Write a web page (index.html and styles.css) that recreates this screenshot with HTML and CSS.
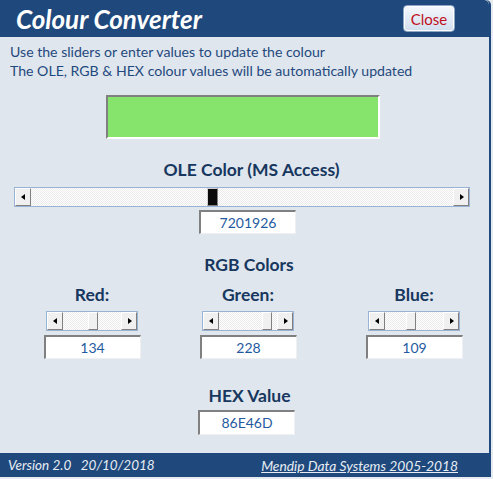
FILE: index.html
```html
<!DOCTYPE html>
<html>
<head>
<meta charset="utf-8">
<title>Colour Converter</title>
<link rel="stylesheet" href="styles.css">
</head>
<body>
<div class="window">
  <header class="titlebar">
    <h1 class="title">Colour Converter</h1>
    <button class="close">Close</button>
  </header>
  <main class="content">
    <p class="intro">Use the sliders or enter values to update the colour<br>The OLE, RGB &amp; HEX colour values will be automatically updated</p>
    <div class="swatch"></div>
    <h2 class="heading h-ole">OLE Color (MS Access)</h2>
    <div class="scrollbar wide">
      <span class="arrow left"></span>
      <span class="track"><span class="thumb dark" style="left:calc((100% - 11px) * 0.4293)"></span></span>
      <span class="arrow right"></span>
    </div>
    <div class="field f-ole">7201926</div>
    <h2 class="heading h-rgb">RGB Colors</h2>
    <div class="channels">
      <div class="channel">
        <h3 class="label">Red:</h3>
        <div class="scrollbar small">
          <span class="arrow left"></span>
          <span class="track"><span class="thumb" style="left:calc((100% - 10px) * 0.5255)"></span></span>
          <span class="arrow right"></span>
        </div>
        <div class="field">134</div>
      </div>
      <div class="channel">
        <h3 class="label">Green:</h3>
        <div class="scrollbar small">
          <span class="arrow left"></span>
          <span class="track"><span class="thumb" style="left:calc((100% - 10px) * 0.8941)"></span></span>
          <span class="arrow right"></span>
        </div>
        <div class="field">228</div>
      </div>
      <div class="channel blue">
        <h3 class="label">Blue:</h3>
        <div class="scrollbar small">
          <span class="arrow left"></span>
          <span class="track"><span class="thumb" style="left:calc((100% - 10px) * 0.4275)"></span></span>
          <span class="arrow right"></span>
        </div>
        <div class="field">109</div>
      </div>
    </div>
    <h2 class="heading h-hex">HEX Value</h2>
    <div class="field f-hex">86E46D</div>
  </main>
  <footer class="footer">
    <span class="version">Version 2.0&nbsp;&nbsp;&nbsp;20/10/2018</span>
    <a class="company" href="#">Mendip Data Systems 2005-2018</a>
  </footer>
</div>
</body>
</html>
```

FILE: styles.css
```css
* { box-sizing: border-box; }
html, body { margin: 0; padding: 0; }
body {
  background: #e6ebf2;
  font-family: Lato, "Open Sans", sans-serif;
  width: 493px;
  height: 479px;
  overflow: hidden;
}
.window {
  width: 491px;
  height: 477px;
  background: #dfe6ee;
  border-right: 2px solid #1f497d;
  border-top-right-radius: 5px;
  display: flex;
  flex-direction: column;
}
.titlebar {
  height: 37px;
  background: #1f497d;
  border-top-right-radius: 5px;
  display: flex;
  align-items: center;
  justify-content: space-between;
  padding: 0 34px 0 16px;
  flex: none;
}
.title {
  margin: 0;
  color: #ffffff;
  font-size: 26px;
  font-weight: 700;
  font-style: italic;
  line-height: 30px;
}
.close {
  width: 52px;
  height: 27px;
  border: 1px solid #8ea6c6;
  border-radius: 4px;
  background: linear-gradient(#f5f8fc, #d2deee);
  color: #c0101c;
  font-family: Lato, "Open Sans", sans-serif;
  font-size: 15px;
  padding: 0;
  box-shadow: inset 0 0 0 1px #ffffff;
}
.content {
  flex: 1;
  display: flex;
  flex-direction: column;
  align-items: center;
}
.intro {
  align-self: stretch;
  margin: 5px 0 0 10px;
  color: #1f497d;
  font-size: 14.1px;
  line-height: 19px;
}
.swatch {
  width: 274px;
  height: 44px;
  margin: 15px 0 0 -4px;
  background: #86e46d;
  border-top: 2px solid #808080;
  border-left: 2px solid #808080;
  border-bottom: 2px solid #ffffff;
  border-right: 2px solid #ffffff;
}
.heading {
  margin: 0;
  color: #17375e;
  font-size: 17.5px;
  font-weight: 700;
  line-height: 20px;
}
.h-ole { margin: 21px 0 0 14px; }
.h-rgb { margin: 21px 0 0 9px; }
.h-hex { margin: 27px 0 0 10px; }
.scrollbar {
  display: flex;
  height: 20px;
  border: 1px solid #9ab3d5;
  background: #ffffff;
}
.scrollbar.wide {
  width: 456px;
  margin: 7px 0 0 -6px;
}
.scrollbar.small {
  width: 92px;
  margin: 0 auto;
}
.track {
  flex: 1;
  position: relative;
  background-color: #ffffff;
  background-image: repeating-conic-gradient(#ebebeb 0 25%, #ffffff 0 50%);
  background-size: 2px 2px;
}
.thumb {
  position: absolute;
  top: 0;
  width: 10px;
  height: 18px;
  background: #f0f0f0;
  border-top: 1px solid #ffffff;
  border-left: 1px solid #ffffff;
  border-right: 1px solid #808080;
  border-bottom: 1px solid #808080;
}
.thumb.dark {
  width: 11px;
  background: #0a0a0a;
  border-top: 1px solid #d0d0d0;
  border-left: 1px solid #d0d0d0;
  border-right: 1px solid #808080;
  border-bottom: 1px solid #808080;
}
.arrow {
  position: relative;
  flex: none;
  width: 16px;
  height: 18px;
  background: #f0f0f0;
  border-top: 1px solid #ffffff;
  border-left: 1px solid #ffffff;
  border-right: 1px solid #808080;
  border-bottom: 1px solid #808080;
}
.arrow::after {
  content: "";
  position: absolute;
  top: 5px;
  width: 0;
  height: 0;
  border-top: 3.5px solid transparent;
  border-bottom: 3.5px solid transparent;
}
.arrow.left::after {
  left: 5px;
  border-right: 4px solid #000000;
}
.arrow.right::after {
  left: 6px;
  border-left: 4px solid #000000;
}
.field {
  width: 97px;
  height: 24px;
  background: #ffffff;
  border-top: 2px solid #808080;
  border-left: 2px solid #808080;
  border-bottom: 1px solid #eef0f3;
  border-right: 1px solid #eef0f3;
  color: #1f5aa0;
  font-size: 14px;
  line-height: 21px;
  text-align: center;
}
.f-ole { margin: 3px 0 0 6px; }
.f-hex { margin: 4px 0 0 4px; height: 25px; }
.channels {
  align-self: stretch;
  display: flex;
  gap: 58px;
  padding-left: 43px;
}
.channel {
  width: 98px;
  display: flex;
  flex-direction: column;
  align-items: center;
}
.channel.blue { margin-left: 10px; }
.label {
  margin: 10px 0 0;
  color: #17375e;
  font-size: 17.5px;
  font-weight: 700;
  line-height: 20px;
  height: 20px;
}
.label + .scrollbar { margin-top: 6px; }
.channel .field { margin-top: 4px; }
.footer {
  margin-top: auto;
  height: 24px;
  background: #1f497d;
  display: flex;
  align-items: center;
  justify-content: space-between;
  padding: 0 31px 0 8px;
  color: #e8edf4;
  font-size: 13.5px;
  font-style: italic;
  flex: none;
}
.company {
  color: #e8edf4;
  text-decoration: underline;
  font-size: 13.8px;
}
```
